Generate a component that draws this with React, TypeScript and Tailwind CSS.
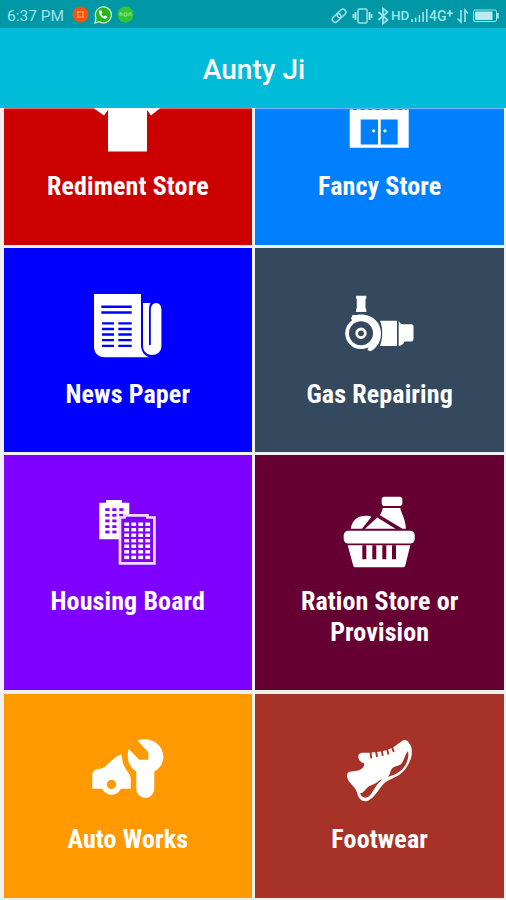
import React from 'react';

const ShirtIcon = () => (
  <svg viewBox="0 0 72 72" className="w-[72px] h-[72px] overflow-visible" fill="#fff">
    <path d="M20 4h10c2 5 10 5 12 0h10l17 20.500L59 32.500l-4-5.500v41.500H16V27l-4 5.500L2 25.500z" />
  </svg>
);

const ShopIcon = () => (
  <svg viewBox="0 0 72 72" className="w-[72px] h-[72px] overflow-visible" fill="#fff">
    <path d="M7 4h57l4 18H2z" />
    <path d="M5.700 26.500h59v38.300h-59z" />
    <path d="M9 26h54" stroke="#0080ff" strokeWidth="2" strokeDasharray="4 3.500" />
    <path d="M16.700 36.500H34v25H16.700zM36.700 36.500h17v25h-17z" fill="#0080ff" />
    <circle cx="29.700" cy="47.800" r="1.600" />
    <circle cx="41" cy="47.800" r="1.600" />
  </svg>
);

const NewspaperIcon = () => (
  <svg viewBox="0 0 72 72" className="w-[72px] h-[72px] overflow-visible" fill="#fff">
    <path d="M2 4h47v51c0 6 3 11 9 12.300H13C6 67.300 2 63 2 56z" />
    <path d="M51 13h7.500c-1 1.500-1.500 4-1.500 7v35h1.800V20c0-4 2-7 5.400-7s5.200 3 5.200 7v36c0 12-18.400 12-18.400 0z" />
    <path d="M9.300 16.700h30.400M9.300 22.500h30.400" stroke="#0000ff" strokeWidth="2.400" />
    <path
      d="M10 33.300h12M10 39h12M10 44.500h12M10 50.200h12M10 55.800h12M26.300 33.300h13.400M26.300 39h13.400M26.300 44.500h13.400M26.300 50.200h13.400M26.300 55.800h13.400"
      stroke="#0000ff"
      strokeWidth="2.300"
    />
  </svg>
);

const RegulatorIcon = () => (
  <svg viewBox="0 0 72 72" className="w-[72px] h-[72px] overflow-visible" fill="#fff">
    <path d="M12 5.700h10.300v2.500l-.8 1v9l.8 1V22H12v-2.800l.8-1v-9l-.8-1z" />
    <path d="M7 28.500l1.500-3.500C12 25.500 15 24.300 19 24.500c11 1 18 9 18 19 0 8-4 14.500-10.500 17.800L23.500 60l1-3z" />
    <circle cx="17" cy="43.300" r="15.800" />
    <circle cx="17" cy="43.300" r="12" fill="#34495e" />
    <circle cx="17" cy="43.300" r="4.300" fill="none" stroke="#fff" strokeWidth="2.800" />
    <path d="M36 30.700h17V56H36c2.500-7 3.500-17 0-25.300z" />
    <path d="M54.700 30.700c1 2.500 2.300 3.500 4.300 3.500h9l1.500 1.500v14L68 51.500h-7.500c-1 2.500-3 4-5.800 4.500z" />
  </svg>
);

const BuildingsIcon = () => (
  <svg viewBox="0 0 72 72" className="w-[72px] h-[72px] overflow-visible" fill="#fff">
    <path d="M7.300 5.700H14V3h16v2.700h7.300v36.600h-30z" />
    <g fill="#8000ff">
      {[11.2, 16.9, 22.5, 28.2, 33.6].map((y, row) => (
        <React.Fragment key={y}>
          <rect x="13.300" y={y} width="4.200" height="2.800" />
          <rect x="20.300" y={y} width="4.200" height="2.800" />
          {row < 2 && <rect x="27.300" y={y} width="4.200" height="2.800" />}
        </React.Fragment>
      ))}
    </g>
    <path d="M28 20.500h4.500v-2.200h23v2.200h6.900v45.900H28z" fill="#8000ff" stroke="#f5dcff" strokeWidth="2.700" />
    {[25.5, 31, 36.5, 42, 47.5, 53.1, 58.7].map((y) => (
      <React.Fragment key={y}>
        <rect x="32.300" y={y} width="4.800" height="3.400" />
        <rect x="39.300" y={y} width="4.800" height="3.400" />
        <rect x="46.300" y={y} width="4.800" height="3.400" />
        <rect x="53.300" y={y} width="4.800" height="3.400" />
      </React.Fragment>
    ))}
  </svg>
);

const BasketIcon = () => (
  <svg viewBox="0 0 72 72" className="w-[72px] h-[72px] overflow-visible" fill="#fff">
    <rect x="37.700" y="-.3" width="20.600" height="9.300" rx="2.800" />
    <path d="M38.700 11h17.600c1 6 4.700 9 5.700 20.700h-3.500L36 18.300c1.500-3 2.300-4.500 2.700-7.300z" />
    <path d="M7 31.700C7 25 13 19 20 19c3-.6 5.500-.3 7.500.8L18 31.700z" />
    <path d="M21 31.700l12.300-11.200L51.500 31.700z" />
    <rect x="-.3" y="33.700" width="71" height="12.800" rx="4.500" />
    <path d="M3.700 48.300h62.600L61.300 68.500c-.3 1.200-1 1.800-2.300 1.800H11.500c-1.300 0-2-.6-2.300-1.800z" />
    <path d="M18.300 48.300h4v14h-4zM28.300 48.300h4v14h-4zM38.300 48.300h4v14h-4zM48 48.300h4v14h-4z" fill="#660033" />
  </svg>
);

const MechanicIcon = () => (
  <svg viewBox="0 0 72 72" className="w-[72px] h-[72px] overflow-visible" fill="#fff">
    <path d="M.3 52.700V38.500c0-3 2-5 6-5.500 3-.4 5-.8 7-2.500C18 26 24 20 29.700 18c.3 8 2.500 13.500 6.500 18.500 1.700 2 2.500 3.500 2.500 5.500v10.700z" />
    <circle cx="19.500" cy="49" r="10" />
    <circle cx="19.500" cy="48.500" r="4.700" fill="#ff9900" />
    <path d="M45.500 4.500C57 0 70.800 7 71.300 20c.2 7-3.300 12.300-9 15.500V53a9 9 0 0 1-18 0V35.500c-7.500-4.500-10.500-14-7.500-22.500l10.500 10.800h9v-7.500z" />
  </svg>
);

const ShoeIcon = () => (
  <svg viewBox="0 0 72 72" className="w-[72px] h-[72px] overflow-visible" fill="#fff">
    <path d="M14.300 20.500c0-2.500 2-3.700 4.500-3.700h6c8-.3 16-1.500 22.500-4.500 5-2.300 7.500-5.500 12-8 2.500-.8 4.500.5 5.500 2.400 2 2.300 3 5 3 8.300.2 4-.5 7-1.800 10-2.500 5.500-5.500 10-10 13.300-5.500 4-12 5.200-16.700 10-3.500 3.500-5 7-8.300 10.500-3 3.500-5.500 6-8.800 6.400-3 .3-5.200-1-6.700-3-2-2.700-2-5-3.500-8.200C9.500 49.500 4 46 3.300 41.500c-.7-2.500 0-5 2.500-5.700 5-1 9-.5 12.500-3.500 1.500-1.500 2.200-3 1.700-5-3.500-1-5.700-3.500-5.700-6.800z" />
    <path
      d="M26.500 16l.8 6.300M32 14.800l1 6.200M37.600 13.700l1.200 6.200M42.900 12.400l1.600 6M47.800 10.500l2 5.500"
      stroke="#a63228"
      strokeWidth="1.900"
    />
    <path
      d="M16 57.500c4-.8 5.500-4.500 8.500-7 3.500-1.700 8-3 11.500-6.500l2-.8c-4 4-6.500 7.500-9 11.800-1.700 3-4 6-6.500 6.500-3 .8-5.500-1.500-6.500-4zM44 40.700c2.500-2.500 2-6.500 4.500-8.700 3-2.500 6.500-1.500 9-4.500 2.800-3.500 3-8 6.500-12.500 1.200 5.500-.8 11.500-3.500 15.500-4 5.500-9.500 8.500-16.500 10.200z"
      fill="#a63228"
    />
  </svg>
);

interface Category {
  name: string;
  color: string;
  icon: React.FC;
}

const categories: Category[] = [
  { name: 'Rediment Store', color: 'bg-[#cc0000]', icon: ShirtIcon },
  { name: 'Fancy Store', color: 'bg-[#0080ff]', icon: ShopIcon },
  { name: 'News Paper', color: 'bg-[#0000ff]', icon: NewspaperIcon },
  { name: 'Gas Repairing', color: 'bg-[#34495e]', icon: RegulatorIcon },
  { name: 'Housing Board', color: 'bg-[#8000ff]', icon: BuildingsIcon },
  { name: 'Ration Store or Provision', color: 'bg-[#660033]', icon: BasketIcon },
  { name: 'Auto Works', color: 'bg-[#ff9900]', icon: MechanicIcon },
  { name: 'Footwear', color: 'bg-[#a63228]', icon: ShoeIcon },
];

const StatusBar = () => (
  <div className="h-7 flex items-center justify-between pl-[7px] pr-[5px] pt-[3px] bg-[#0097a7] text-[#9ee4ea]">
    <div className="flex items-center">
      <span className="w-[65px] pt-[2px] text-[15.500px] leading-none whitespace-nowrap">6:37 PM</span>
      <svg width="62" height="18" viewBox="0 0 62 18" className="-mt-px">
        <circle cx="8.500" cy="8.500" r="8" fill="#f0560f" />
        <path d="M6 5v7M11 5v7M5 6h7M5 11h7" stroke="#ffa66e" strokeWidth="1" fill="none" />
        <path d="M23 17l1-5a8 8 0 1 1 3 3.600z" fill="#27b51b" stroke="#c5f0d2" strokeWidth="1.300" />
        <path d="M27.500 4.500c-2 2 1.500 7.500 5.500 8.300 1.500 0 2.500-1.200 2.300-2l-2.200-1.200-1.300 1c-1.200-.5-2.200-1.800-2.500-2.800l1-1-1-2.500z" fill="#fff" />
        <circle cx="53.500" cy="8.500" r="8" fill="#35c436" />
        <path d="M48 10V7h2v3M52 10V7h3v3zM57 10V7h2v3" stroke="#8be38b" strokeWidth="1" fill="none" />
      </svg>
    </div>
    <div className="flex items-center">
      <svg width="60" height="18" viewBox="0 0 60 18" fill="none" stroke="currentColor" strokeWidth="1.500">
        <rect x="-4.900" y="-2.900" width="9.800" height="5.800" rx="2.900" transform="translate(5.700 11) rotate(-43)" />
        <rect x="-4.900" y="-2.900" width="9.800" height="5.800" rx="2.900" transform="translate(10.500 6.500) rotate(-43)" />
        <rect x="27" y="2" width="9" height="14" rx="1.500" />
        <path d="M24.500 5v8M38.500 5v8" strokeWidth="2" />
        <path d="M22.500 7v4M40.500 7v4" strokeWidth="2" />
        <path d="M47.500 5l9 8L52 16.500v-15L56.500 5l-9 8" strokeWidth="1.700" />
      </svg>
      <span className="w-[20px] text-[13.500px] leading-none font-medium tracking-[-0.200px]">HD</span>
      <svg width="18" height="16" viewBox="0 0 18 16" stroke="currentColor" strokeWidth="1.600">
        <path d="M1 14v-3M4.700 14v-4.500M8.400 14V7M12.100 14V4M15.800 14V1" />
      </svg>
      <span className="w-[27px] text-[14px] leading-none font-medium whitespace-nowrap">4G<sup className="text-[12px] font-bold top-[-3px]">+</sup></span>
      <svg width="45" height="16" viewBox="0 0 45 16" fill="none" stroke="currentColor" strokeWidth="1.600">
        <path d="M5 2v12L1.500 10.500M9 14V2l3 3.500" />
        <rect x="17.500" y="2" width="23" height="11.500" rx="1.500" strokeWidth="1" />
        <path d="M19 3.500h17.500v8.500H19z" fill="#bdeaed" stroke="none" />
        <path d="M41.800 5v5.500" strokeWidth="2" />
      </svg>
    </div>
  </div>
);

const CategoryTile: React.FC<{ category: Category }> = ({ category }) => (
  <div className={`${category.color} flex flex-col items-center pt-[42px] pb-[42.500px] text-white`}>
    <category.icon />
    <span className="mt-[16.500px] w-[180px] text-center text-[26px] leading-[31px] tracking-[0.120px] font-bold font-stretch-[75%]">
      {category.name}
    </span>
  </div>
);

const App: React.FC = () => {
  return (
    <div className="w-[506px] h-[900px] overflow-hidden flex flex-col bg-[#f0f0f0] font-['Roboto',sans-serif]">
      <header className="relative z-10 shrink-0 shadow-[0_1px_1px_rgba(255,255,255,0.4)]">
        <StatusBar />
        <div className="h-[79.500px] flex items-center justify-center pl-[2px] pt-[5px] bg-[#00bcd9]">
          <h1 className="text-[28px] leading-none font-medium text-white">Aunty Ji</h1>
        </div>
      </header>
      {/* grid is scrolled, so the first row starts underneath the header */}
      <main className="-mt-[66.800px] pl-[3.500px] pr-[2px] grid grid-cols-2 gap-[3.300px]">
        {categories.map((category) => (
          <CategoryTile key={category.name} category={category} />
        ))}
      </main>
    </div>
  );
};

export default App;
